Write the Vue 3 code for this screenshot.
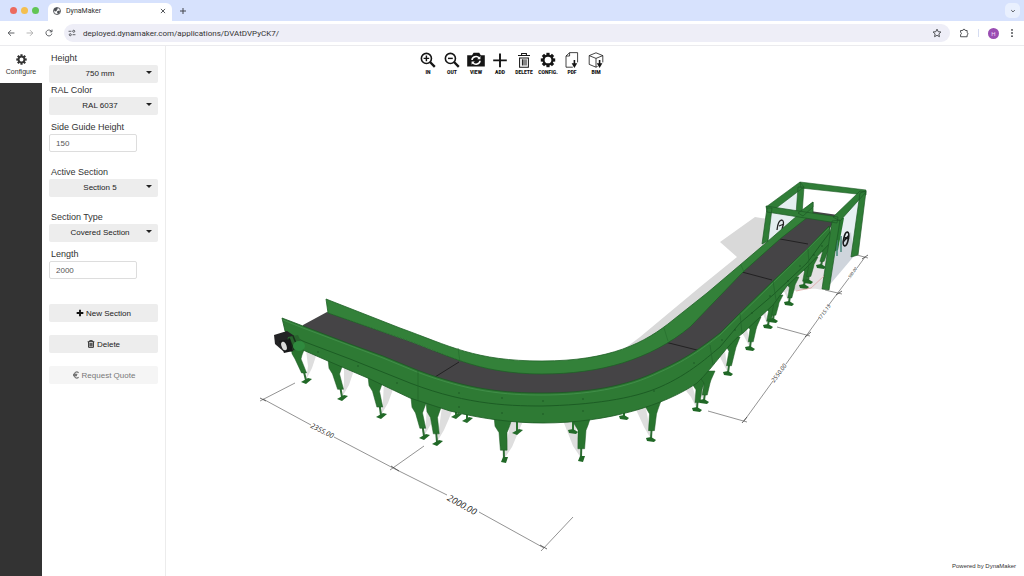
<script setup>
import { ref } from 'vue'

const height = ref('750 mm')
const ral = ref('RAL 6037')
const guide = ref('150')
const section = ref('Section 5')
const type = ref('Covered Section')
const len = ref('2000')
const url = ref('deployed.dynamaker.com/applications/DVAtDVPyCK7/')

const tools = ['IN', 'OUT', 'VIEW', 'ADD', 'DELETE', 'CONFIG.', 'PDF', 'BIM']
const teeth = [0, 45, 90, 135, 180, 225, 270, 315]

// top x, top y, foot x, foot y, width
const legs = [
  [298, 348, 306, 380, 6], [336, 362, 342, 397, 7], [376, 379, 381, 415, 7],
  [419, 401, 424, 436, 7], [434, 405, 437, 442, 7], [503, 419, 504, 459, 8],
  [582, 416, 581, 458, 8], [653, 401, 651, 439, 7], [699, 380, 697, 409, 6],
  [707, 374, 704, 401, 6], [732, 340, 728, 373, 6], [753, 320, 750, 348, 6],
  [771, 304, 768, 326, 5], [776, 298, 773, 320, 5], [792, 280, 789, 303, 5],
  [807, 264, 804, 286, 5], [811, 260, 808, 281, 5], [825, 245, 821, 266, 5],
]
const backFeet = [[456, 415], [467, 419], [517, 431], [573, 431], [624, 417]]

function legPath([x, y, fx, fy, w]) {
  const h = fy - y
  const a = x + (fx - x) * 0.76
  const b = y + h * 0.78
  return `M${x - w - 1} ${y - 3}H${x + w + 2}L${x + w - 2} ${y + h * 0.22}L${x + w / 2} ${y + h * 0.34}L${a + w * 0.42} ${b}H${a - w * 0.42}L${x - w / 2} ${y + h * 0.34}L${x - w} ${y + h * 0.18}Z`
}
function footPath(fx, fy, side) {
  if (side === 0) return `M${fx - 3} ${fy + 3}l2 -5h5l-2 6z`
  return side > 0
    ? `M${fx - 5} ${fy + 2}l7 -4 4 1 -6 5z`
    : `M${fx - 5} ${fy - 1}l5 -1 5 3 -2 2 -7 -1z`
}
function side([x, , fx]) {
  if (Math.abs(fx - x) < 2) return 0
  return fx > x ? 1 : -1
}
function rod([x, y, fx, fy]) {
  return `M${x + (fx - x) * 0.7} ${y + (fy - y) * 0.7}L${fx} ${fy}`
}
function legShadow([x, y, fx, fy, w]) {
  const dir = x > 560 ? -1 : 1
  return `M${fx} ${fy}L${fx + dir * w} ${fy - 12}L${x + dir * 20} ${y + 2}H${x + dir * 8}L${fx + dir * 2} ${fy - 14}Z`
}

const bolts = [
  [318, 352], [358, 366], [397, 383], [459, 393], [459, 407], [502, 398], [502, 413],
  [543, 401], [543, 414], [583, 399], [583, 411], [654, 391], [694, 363], [722, 340],
  [735, 330], [752, 313], [770, 296], [788, 281], [800, 266], [814, 255], [822, 246],
]
</script>

<template>
  <div class="window">
    <header>
      <div class="tabs">
        <span class="light red"></span><span class="light amber"></span><span class="light green"></span>
        <div class="tab">
          <svg class="i8" viewBox="0 0 16 16"><circle cx="8" cy="8" r="7" fill="#fff" stroke="#4a4d52" stroke-width="1.8" /><path d="M3 2.5L8 1.5 10 4 7 6 8 8 4 9 1.5 6ZM9 8l4-1 1 3-3 4-2-1-1-3Z" fill="#4a4d52" /></svg>
          <span>DynaMaker</span>
          <button class="plain close" aria-label="Close tab"><svg class="i6" viewBox="0 0 10 10"><path d="M1.5 1.5l7 7m0-7l-7 7" class="ink" /></svg></button>
        </div>
        <button class="plain" aria-label="New tab"><svg class="i8" viewBox="0 0 12 12"><path d="M6 1.5v9M1.5 6h9" class="ink" /></svg></button>
        <button class="plain search" aria-label="Search tabs"><svg class="i6" viewBox="0 0 10 10"><path d="M2 3.5l3 3 3-3" class="ink" /></svg></button>
      </div>
      <div class="bar">
        <button class="plain nav" aria-label="Back"><svg class="i8" viewBox="0 0 14 14"><path d="M13 7H2M7 2L2 7l5 5" class="ink" /></svg></button>
        <button class="plain nav" aria-label="Forward"><svg class="i8" viewBox="0 0 14 14"><path d="M1 7h11M7 2l5 5-5 5" class="ink pale" /></svg></button>
        <button class="plain nav" aria-label="Reload"><svg class="i8" viewBox="0 0 14 14"><path d="M12 8A5.2 5.2 0 1 1 10.5 3.2L12 4.6M12.300 1v4H8.3" class="ink" /></svg></button>
        <div class="address">
          <svg class="i8" viewBox="0 0 14 14"><path d="M1 4h5M8 10h5" class="ink" /><circle cx="10" cy="4" r="1.8" class="ink" /><circle cx="4" cy="10" r="1.8" class="ink" /></svg>
          <input v-model="url" aria-label="Address">
          <button class="plain" aria-label="Bookmark"><svg class="i10" viewBox="0 0 16 16"><path d="M8 1.8l1.900 4.100 4.400.5-3.300 3 .9 4.500L8 11.700l-3.900 2.200.9-4.500-3.300-3 4.400-.5z" class="ink" /></svg></button>
        </div>
        <button class="plain ext" aria-label="Extensions"><svg class="i10" viewBox="0 0 16 16"><path d="M2.500 4H6a2 2 0 0 1 4 0h3v3.500a1.800 1.800 0 0 1 0 3.500v3H2.500v-3.500a1.800 1.800 0 0 0 0-3.500z" class="ink" /></svg></button>
        <span class="rule"></span>
        <button class="avatar" aria-label="Profile">H</button>
        <button class="plain" aria-label="Menu"><svg class="i10" viewBox="0 0 16 16" fill="#45474c"><circle cx="8" cy="3" r="1.5" /><circle cx="8" cy="8" r="1.5" /><circle cx="8" cy="13" r="1.5" /></svg></button>
      </div>
    </header>

    <main>
      <nav class="rail">
        <button class="configure">
          <svg class="gear" viewBox="-10 -10 20 20"><rect v-for="t in teeth" :key="t" x="-2" y="-9.5" width="4" height="5" :transform="`rotate(${t})`" fill="#333" /><circle r="5.3" fill="none" stroke="#333" stroke-width="3.4" /></svg>
          Configure
        </button>
      </nav>

      <form class="panel" @submit.prevent>
        <div class="field"><label for="h">Height</label><div class="pick"><select id="h" v-model="height"><option>750 mm</option></select><i></i></div></div>
        <div class="field space5"><label for="r">RAL Color</label><div class="pick"><select id="r" v-model="ral"><option>RAL 6037</option></select><i></i></div></div>
        <div class="field space13"><label for="g">Side Guide Height</label><input id="g" v-model="guide"></div>
        <div class="field space13"><label for="a">Active Section</label><div class="pick"><select id="a" v-model="section"><option>Section 5</option></select><i></i></div></div>
        <div class="field space5"><label for="t">Section Type</label><div class="pick"><select id="t" v-model="type"><option>Covered Section</option></select><i></i></div></div>
        <div class="field"><label for="l">Length</label><input id="l" v-model="len"></div>
        <div class="actions">
          <button type="button"><svg class="i8" viewBox="0 0 12 12"><path d="M6 1v10M1 6h10" stroke="#111" stroke-width="2.8" /></svg>New Section</button>
          <button type="button"><svg class="i8" viewBox="0 0 12 12" fill="none" stroke="#222" stroke-width="1.4"><path d="M1 2.6h10M4 2.500V1h4v1.500M2.400 3v8h7.200V3M4.500 4.500v5M6 4.500v5M7.500 4.500v5" /></svg>Delete</button>
          <button type="button" disabled><svg class="i8" viewBox="0 0 12 12" fill="none" stroke="#777" stroke-width="1.8"><path d="M10 2.500C6.500 0 3.500 2 3.500 6s3 6 6.500 3.500M1.500 5h6.500M1.500 7h6" /></svg>Request Quote</button>
        </div>
      </form>

      <section class="stage">
        <svg class="scene" viewBox="166 46 858 530" role="img" aria-label="Conveyor model">
          <!-- floor shadows -->
          <path d="M720 242L755 217 768 219 766 243 833 250 827 287 800 290 720 300 620 352 640 337 700 287 737 257Z" fill="#d9d9d9" />
          <path d="M780 262L826 252 822 290 793 284Z" fill="#e4e2e4" />
          <path v-for="(l, n) in legs" :key="'s' + n" :d="legShadow(l)" fill="#dedede" />
          <g v-for="f in backFeet" :key="f[0]"><path :d="`M${f[0]} ${f[1] - 14}V${f[1]}`" stroke="#2b7330" stroke-width="2" /><path :d="footPath(f[0], f[1], f[0] > 560 ? -1 : 1)" fill="#256c2b" /></g>

          <!-- cover, far side -->
          <path d="M770 212L801 187 799 214 785 237 764 242Z" fill="#e4eef0" />
          <path d="M840 220L863 196 853 257 826 289Z" fill="#e7f0f3" />
          <path d="M833 250L851 232 854 256 826 289Z" fill="#cfd5dc" />
          <path d="M798 187H804L802 214H796ZM800 182L866 190V195L801 188ZM766 207L800 182 804 187 771 212Z" fill="#307d37" stroke="#1f5a26" stroke-width=".6" />
          <path d="M777 230q1 -10 5 -10q3 1 0 9M779 226l5 -2" fill="none" stroke="#222" stroke-width="1.3" />
          <g transform="rotate(12 846 239)" fill="none" stroke="#171a1b" stroke-width="1.6"><ellipse cx="846" cy="239" rx="2.3" ry="7" /><path d="M844 238h5M844 242l4-7" /></g>
          <path d="M837 216L844 218 838 250 833 252Z" fill="#287831" />
          <path d="M837 240V256M841 236V252" stroke="#468779" stroke-width="1.5" />

          <!-- legs -->
          <g v-for="(l, n) in legs" :key="'l' + n">
            <path :d="rod(l)" stroke="#2d6c33" stroke-width="2" />
            <path :d="legPath(l)" fill="#29742f" stroke="#1d5923" stroke-width=".5" />
            <path :d="footPath(l[2], l[3], side(l))" fill="#206826" />
          </g>

          <!-- belt -->
          <path d="M303 325L327 312 400 338C445 353 475 373 542 373 600 373 650 359 690 326L743 271 780 238 810 211 838 215 829 230 807 252 773 284 740 316C720 336 690 362 660 374 626 391 585 397 542 397 505 397 470 394 417 374L383 359 350 347 303 329Z" fill="#454446" />
          <path d="M435 377L459 362M665 342L697 350M742 272L772 280M780 239L808 244" stroke="#222122" fill="none" />

          <!-- far guide -->
          <path d="M326 299L400 328C450 346 475 361 542 361 610 361 645 343 673 320L707 293 740 265 767 242 813 202V213L780 239 743 272 690 327C650 360 600 374 542 374 475 374 445 353 400 338L328 313Z" fill="#338139" stroke="#1e6126" stroke-width=".8" />
          <path d="M458 348L460 362M664 328L668 341M741 265L744 272" stroke="#236b2b" stroke-width=".6" />

          <!-- near guide -->
          <path d="M282 318L303 326 350 344 383 356 417 370C470 390 505 393 542 393 585 393 626 387 660 370 690 357 708 342 720 333L740 313 773 281 807 249 829 226 832 241 807 267 787 286 773 305 743 333C727 344 715 366 697 383 665 405 608 423 543 423 515 423 482 419 450 411L410 398 370 379 328 361 303 350 285 331Z" fill="#2e7a34" stroke="#1b5922" stroke-width=".8" />
          <path d="M290 335L305 342 350 359 400 379C460 404 505 406 542 406 590 405 633 399 660 387 690 374 710 355 720 347L740 323 773 295 807 263 830 232" fill="none" stroke="#1c5d24" stroke-width="1" />
          <path d="M283 320L303 328 383 358 417 372C470 392 505 395 542 395 585 395 626 389 660 372 690 359 708 344 720 335L773 283 829 228" fill="none" stroke="#489550" stroke-width=".7" />
          <path d="M418 370V401M710 345L713 365M740 314L742 333M773 281L776 300M808 249L809 265" stroke="#216429" stroke-width=".7" />
          <circle v-for="b in bolts" :key="b[0] + '-' + b[1]" :cx="b[0]" :cy="b[1]" r=".7" fill="#174e20" />

          <!-- drive motor -->
          <path d="M274 335L287 331 296 337 292 350 283 351 275 344Z" fill="#232325" />
          <path d="M288 337L298 335 302 344 293 352 285 350Z" fill="#28642d" />
          <path d="M289 338l5 12M293 336l5 12" stroke="#17301a" stroke-width="1.5" />
          <path d="M279 341L290 339 293 351 284 353Z" fill="#171819" /><ellipse cx="284" cy="346" rx="2.5" ry="4.500" fill="#dadada" transform="rotate(-20 284 346)" />
          <ellipse cx="299" cy="346" rx="6" ry="5" fill="#2f8a3e" />

          <!-- cover, near side -->
          <path d="M767 208H772L768 241 762 244ZM766 206L838 217 837 223 767 212ZM832 221L840 220 829 290 822 289ZM860 193L866 191 858 255 851 257ZM833 217L860 191 866 192 840 221ZM798 213L813 202V207L803 216Z" fill="#2f7d36" stroke="#1d5925" stroke-width=".7" />
          <path d="M796 291L811 288 824 276" fill="none" stroke="#df9d9d" stroke-width=".7" />

          <!-- dimensions -->
          <g fill="none" stroke="#777" stroke-width=".8">
            <path d="M260 401L295 383M263 399L311 425M334 437L395 469M390 470L424 446M395 469L447 495M479 512L544 548M541 551L573 517" />
            <path d="M708 411L747 422M744 421L773 381M786 364L819 318M828 306L849 278M857 268L865 257M777 327L810 336M825 290L842 294M857 255L868 258" />
            <path d="M260 398l6 3M391 466l8 5M540 545l7 4M742 423l5-6M805 337l6-5M836 295l6-4M862 259l6-4" stroke="#444" />
          </g>
          <g class="dims"><text transform="translate(322 431) rotate(27)" font-size="7" dy="2">2355.00</text><text transform="translate(462 505) rotate(29)" font-size="9" dy="3">2000.00</text><text transform="translate(779 373) rotate(-54)" font-size="6" dy="2">2550.00</text><text transform="translate(824 312) rotate(-54)" font-size="5" dy="2">1715.15</text><text transform="translate(853 273) rotate(-54)" font-size="4" dy="1">500.00</text></g>
        </svg>
        <a class="powered" href="#">Powered by DynaMaker</a>
      </section>
    </main>

    <div class="tools">
      <button v-for="(t, n) in tools" :key="t">
        <svg viewBox="0 0 20 20" fill="none" stroke="#151515" stroke-width="1.8">
          <g v-if="n < 2"><circle cx="8" cy="8" r="6.3" stroke-width="2" /><path d="M12.500 12.500l6 6" stroke-width="3" /><path :d="n ? 'M5 8h6' : 'M4.500 8h7M8 4.500v7'" /></g>
          <g v-else-if="n === 2"><path d="M-1 4H5L7 1H14L16 4H21V18H-1Z" fill="#151515" stroke="none" /><path d="M5 10a5 4.500 0 0 1 9-2.500M15 11a5 4.500 0 0 1-9 2.500" stroke="#fff" stroke-width="2" /><path d="M15.500 5v4h-4zM4.500 16v-4h4z" fill="#fff" stroke="none" /></g>
          <path v-else-if="n === 3" d="M10 2v17M1.500 10.500h17" stroke-width="2.4" />
          <path v-else-if="n === 4" d="M2.500 4.500h15M7 4V2h6v2M4 7.500h12M4.500 7v12h11V7M8 9v8M10 9v8M12.500 9v8" stroke-width="1.3" />
          <g v-else-if="n === 5" transform="translate(10 10)"><rect v-for="a in teeth" :key="a" x="-2" y="-9" width="4" height="4" :transform="`rotate(${a})`" fill="#151515" stroke="none" /><circle r="5.6" stroke-width="2.8" /></g>
          <g v-else-if="n === 6"><path d="M11 19H2.500V5L7 .8H17V13M2.500 5H7V1" stroke-width="1" /><path d="M13 10v6" stroke-width="2" /><path d="M9.500 14h7L13 20z" fill="#151515" stroke="none" /></g>
          <g v-else><path d="M12 18L10 19 1.500 15.500V4.500L10 1l8.500 3.500V13M1.500 4.500L10 8l8.500-3.500M10 8v11" stroke-width="1" /><path d="M14.500 10v6" stroke-width="2" /><path d="M11 14h7l-3.500 6z" fill="#151515" stroke="none" /></g>
        </svg>
        <span>{{ t }}</span>
      </button>
    </div>
  </div>
</template>

<style>
body { background: #fff; }
</style>

<style scoped>
* { box-sizing: border-box; }
.window { position: relative; min-height: 100vh; display: flex; flex-direction: column; font-family: "Liberation Sans", Arial, sans-serif; color: #333; background: #fff; }
button, input, select { font: inherit; color: inherit; border: 0; margin: 0; padding: 0; background: none; }
svg { display: block; flex: none; }
.i6 { width: 6px; height: 6px; }
.i8 { width: 8px; height: 8px; }
.i10 { width: 10px; height: 10px; }
.ink { fill: none; stroke: #45474c; stroke-width: 1.5; }
.pale { stroke: #aaa; }
.plain { display: flex; align-items: center; justify-content: center; }
header { border-bottom: 1px solid #ebebee; font-family: Roboto, sans-serif; }
.tabs { height: 21px; background: #d7e2fd; display: flex; align-items: center; padding: 0 4px 0 10px; }
.light { width: 7px; height: 7px; border-radius: 50%; margin-right: 4px; }
.red { background: #ec6a5e; }
.amber { background: #f4bf4f; }
.green { background: #61c554; }
.tab { align-self: flex-end; width: 124px; height: 18px; margin: 0 7px 0 5px; padding: 0 6px 2px 5px; border-radius: 6px 6px 0 0; background: #fff; display: flex; align-items: center; gap: 5px; font-size: 7px; }
.close { margin-left: auto; }
.search { margin-left: auto; width: 15px; height: 15px; border-radius: 5px; background: #e9f0fe; }
.bar { height: 24px; display: flex; align-items: center; padding: 0 7px; }
.nav { width: 8px; margin-right: 11px; }
.address { flex: 1; height: 18px; border-radius: 9px; background: #eeeef7; display: flex; align-items: center; gap: 7px; padding: 0 8px 0 4px; }
.address input { flex: 1; min-width: 0; font-size: 8px; outline: 0; }
.ext { margin: 0 9px; }
.rule { width: 1px; height: 8px; background: #d5dcf1; margin-right: 9px; }
.avatar { width: 11px; height: 11px; border-radius: 50%; background: #9a4db2; color: #f0d8f5; font-size: 6px; line-height: 11px; text-align: center; margin-right: 8px; }
main { flex: 1; display: grid; grid-template-columns: 42px 124px 1fr; }
.rail { background: #333; }
.configure { width: 100%; height: 37px; background: #fff; display: flex; flex-direction: column; align-items: center; justify-content: center; gap: 3px; font-size: 7px; line-height: 8px; }
.gear { width: 11px; height: 11px; }
.panel { border-right: 1px solid #ececec; padding: 5px 7px; }
.field label { display: block; height: 14px; padding-left: 2px; font-size: 9px; line-height: 14px; }
.field input { display: block; width: 88px; height: 18px; padding: 0 6px; border: 1px solid #ddd; border-radius: 2px; font-size: 8px; color: #555; }
.space5 { margin-bottom: 5px; }
.space13 { margin-bottom: 13px; }
.pick { position: relative; }
.pick select { display: block; appearance: none; width: 100%; height: 18px; padding: 0 7px 1px 0; border-radius: 2px; background: #ededed; font-size: 8px; text-align: center; text-align-last: center; color: #222; }
.pick i { position: absolute; right: 6px; top: 6px; border: 3px solid transparent; border-top: 3px solid #222; border-bottom: 0; pointer-events: none; }
.actions { margin-top: 25px; display: flex; flex-direction: column; gap: 13px; }
.actions button { height: 18px; border-radius: 2px; background: #ededed; display: flex; align-items: center; justify-content: center; gap: 2px; font-size: 8px; color: #222; }
.actions button:disabled { background: #f5f5f5; color: #777; }
.stage { position: relative; display: flex; min-width: 0; }
.scene { flex: 1; width: 100%; min-width: 0; }
.dims { font-family: "Open Sans", sans-serif; font-style: italic; fill: #222; text-anchor: middle; }
.powered { position: absolute; right: 8px; bottom: 6px; font-size: 6px; line-height: 8px; color: #333; text-decoration: none; }
.tools { position: absolute; top: 52px; left: 0; right: 0; display: flex; justify-content: center; pointer-events: none; }
.tools button { width: 24px; display: flex; flex-direction: column; align-items: center; gap: 1px; pointer-events: auto; }
.tools svg { width: 16px; height: 16px; overflow: visible; }
.tools span { font: 900 5px/6px Roboto, sans-serif; color: #111; }
</style>
